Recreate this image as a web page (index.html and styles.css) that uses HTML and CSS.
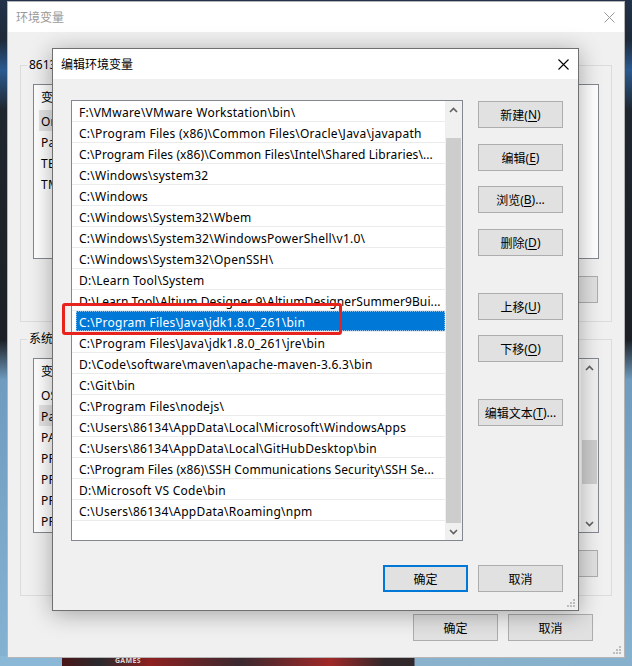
FILE: index.html
```html
<!DOCTYPE html>
<html lang="zh-CN">
<head>
<meta charset="utf-8">
<title>编辑环境变量</title>
<link rel="stylesheet" href="styles.css">
</head>
<body>
<div class="desktop">
  <span class="wall-text">GAMES</span>

  <div class="win bgwin">
    <div class="titlebar">
      <span class="title inactive">环境变量</span>
      <span class="close-btn inactive-x"><svg width="11" height="11" viewBox="0 0 11 11"><path d="M0.5 0.5L10.5 10.5M10.5 0.5L0.5 10.5" stroke="currentColor" stroke-width="1" fill="none"/></svg></span>
    </div>
    <div class="bg-body">
      <fieldset class="group">
        <legend>86134的用户变量(<u>U</u>)</legend>
        <div class="listview">
          <div class="lv-main">
            <div class="lv-head"><span class="col-name">变量</span><span class="col-val">值</span></div>
            <div class="lv-row sel"><span>OneDrive</span></div>
            <div class="lv-row"><span>Path</span></div>
            <div class="lv-row"><span>TEMP</span></div>
            <div class="lv-row"><span>TMP</span></div>
          </div>
        </div>
        <div class="btn-row">
          <button class="btn">新建(<u>N</u>)...</button>
          <button class="btn">编辑(<u>E</u>)...</button>
          <button class="btn">删除(<u>D</u>)</button>
        </div>
      </fieldset>

      <fieldset class="group sys">
        <legend>系统变量(<u>S</u>)</legend>
        <div class="listview">
          <div class="lv-main">
            <div class="lv-head"><span class="col-name">变量</span><span class="col-val">值</span></div>
            <div class="lv-row"><span>OS</span></div>
            <div class="lv-row sel"><span>Path</span></div>
            <div class="lv-row"><span>PATHEXT</span></div>
            <div class="lv-row"><span>PROCESSOR_ARCHITECTURE</span></div>
            <div class="lv-row"><span>PROCESSOR_IDENTIFIER</span></div>
            <div class="lv-row"><span>PROCESSOR_LEVEL</span></div>
            <div class="lv-row"><span>PROCESSOR_REVISION</span></div>
          </div>
          <div class="vscroll">
            <div class="sb-btn"><svg width="9" height="6" viewBox="0 0 9 6"><polyline points="1,5 4.5,1.5 8,5" fill="none" stroke="#606060" stroke-width="1.6"/></svg></div>
            <div class="sb-track small"><div class="sb-thumb small"></div></div>
            <div class="sb-btn"><svg width="9" height="6" viewBox="0 0 9 6"><polyline points="1,1 4.5,4.5 8,1" fill="none" stroke="#606060" stroke-width="1.6"/></svg></div>
          </div>
        </div>
        <div class="btn-row">
          <button class="btn">新建(<u>W</u>)...</button>
          <button class="btn">编辑(<u>I</u>)...</button>
          <button class="btn">删除(<u>L</u>)</button>
        </div>
      </fieldset>

      <div class="foot-row">
        <button class="btn">确定</button>
        <button class="btn">取消</button>
      </div>
    </div>
    <svg class="grip" width="8" height="8" viewBox="0 0 8 8"><g fill="#bdbdbd"><rect x="6" y="0" width="2" height="2"/><rect x="3" y="3" width="2" height="2"/><rect x="6" y="3" width="2" height="2"/><rect x="0" y="6" width="2" height="2"/><rect x="3" y="6" width="2" height="2"/><rect x="6" y="6" width="2" height="2"/></g></svg>
  </div>

  <div class="win dialog">
    <div class="titlebar">
      <span class="title">编辑环境变量</span>
      <span class="close-btn"><svg width="11" height="11" viewBox="0 0 11 11"><path d="M0.5 0.5L10.5 10.5M10.5 0.5L0.5 10.5" stroke="currentColor" stroke-width="1.1" fill="none"/></svg></span>
    </div>
    <div class="dlg-body">
      <div class="pathlist">
        <div class="rows">
          <div class="row">F:\VMware\VMware Workstation\bin\</div>
          <div class="row">C:\Program Files (x86)\Common Files\Oracle\Java\javapath</div>
          <div class="row fit">C:\Program Files (x86)\Common Files\Intel\Shared Libraries\...</div>
          <div class="row">C:\Windows\system32</div>
          <div class="row">C:\Windows</div>
          <div class="row">C:\Windows\System32\Wbem</div>
          <div class="row">C:\Windows\System32\WindowsPowerShell\v1.0\</div>
          <div class="row">C:\Windows\System32\OpenSSH\</div>
          <div class="row">D:\Learn Tool\System</div>
          <div class="row fit">D:\Learn Tool\Altium Designer 9\AltiumDesignerSummer9Bui...</div>
          <div class="row sel"><span>C:\Program Files\Java\jdk1.8.0_261\bin</span></div>
          <div class="row">C:\Program Files\Java\jdk1.8.0_261\jre\bin</div>
          <div class="row">D:\Code\software\maven\apache-maven-3.6.3\bin</div>
          <div class="row">C:\Git\bin</div>
          <div class="row">C:\Program Files\nodejs\</div>
          <div class="row">C:\Users\86134\AppData\Local\Microsoft\WindowsApps</div>
          <div class="row">C:\Users\86134\AppData\Local\GitHubDesktop\bin</div>
          <div class="row fit">C:\Program Files (x86)\SSH Communications Security\SSH Se...</div>
          <div class="row">D:\Microsoft VS Code\bin</div>
          <div class="row">C:\Users\86134\AppData\Roaming\npm</div>
        </div>
        <div class="vscroll">
          <div class="sb-btn"><svg width="9" height="6" viewBox="0 0 9 6"><polyline points="1,5 4.5,1.5 8,5" fill="none" stroke="#606060" stroke-width="1.6"/></svg></div>
          <div class="sb-track"><div class="sb-thumb"></div></div>
          <div class="sb-btn"><svg width="9" height="6" viewBox="0 0 9 6"><polyline points="1,1 4.5,4.5 8,1" fill="none" stroke="#606060" stroke-width="1.6"/></svg></div>
        </div>
      </div>
      <div class="side">
        <button class="btn">新建(<u>N</u>)</button>
        <button class="btn g16">编辑(<u>E</u>)</button>
        <button class="btn g15">浏览(<u>B</u>)...</button>
        <button class="btn g16">删除(<u>D</u>)</button>
        <button class="btn g37">上移(<u>U</u>)</button>
        <button class="btn g15">下移(<u>O</u>)</button>
        <button class="btn g37">编辑文本(<u>T</u>)...</button>
      </div>
      <div class="dlg-foot">
        <button class="btn default">确定</button>
        <button class="btn">取消</button>
      </div>
    </div>
    <div class="mark"></div>
    <svg class="grip" width="8" height="8" viewBox="0 0 8 8"><g fill="#bdbdbd"><rect x="6" y="0" width="2" height="2"/><rect x="3" y="3" width="2" height="2"/><rect x="6" y="3" width="2" height="2"/><rect x="0" y="6" width="2" height="2"/><rect x="3" y="6" width="2" height="2"/><rect x="6" y="6" width="2" height="2"/></g></svg>
  </div>
</div>
</body>
</html>
```

FILE: styles.css
```css
html, body {
  margin: 0;
  padding: 0;
}

.desktop {
  position: relative;
  width: 632px;
  height: 666px;
  overflow: hidden;
  font-family: "Noto Sans", "Noto Sans CJK SC", sans-serif;
  font-size: 12px;
  color: #000;
  background:
    linear-gradient(to right, #8cb8d8 0, #8cb8d8 62px, #4a1618 62px, #2a2a2e 100px, #8e2020 150px, #3a2a30 240px, #a02828 330px, #30282a 385px, #30282a 414px, #8ab2cc 415px, #86b0cc 100%) bottom left / 100% 10px no-repeat,
    linear-gradient(to bottom, #22324a 0, #1f2a3a 40px, #2a5a90 70px, #20262e 110px, #1c2026 340px, #6f9cbf 380px, #86b2d2 100%);
}

.wall-text {
  position: absolute;
  left: 115px;
  top: 656px;
  font-size: 7px;
  font-weight: bold;
  color: #d8d8d8;
  letter-spacing: 0.3px;
}

.win {
  position: absolute;
  box-sizing: border-box;
  background: #f0f0f0;
  display: flex;
  flex-direction: column;
}

.bgwin {
  left: 7px;
  top: 1px;
  width: 618px;
  height: 657px;
  border: 1px solid #b5b5b5;
}

.dialog {
  left: 52px;
  top: 48px;
  width: 527px;
  height: 563px;
  border: 1px solid #707070;
  box-shadow: 0 3px 22px rgba(0, 0, 0, 0.32);
}

.titlebar {
  height: 30px;
  flex: none;
  background: #fff;
  display: flex;
  align-items: center;
  justify-content: space-between;
  padding-left: 8px;
}

.title {
  line-height: 30px;
  padding-top: 1px;
}

.title.inactive {
  color: #9a9a9a;
}

.close-btn {
  width: 30px;
  height: 30px;
  display: flex;
  align-items: center;
  justify-content: center;
  color: #000;
}

.close-btn.inactive-x {
  color: #9a9a9a;
}

/* ---------- background window ---------- */
.bg-body {
  flex: 1;
  display: flex;
  flex-direction: column;
  padding: 25px 12px 0 12px;
}

.group {
  margin: 0;
  border: 1px solid #dcdcdc;
  padding: 11px 12px 18px 12px;
  min-width: 0;
}

.group.sys {
  margin-top: 9px;
}

.group legend {
  padding: 0 2px;
  margin-left: -6px;
  line-height: 16px;
}

.listview {
  height: 175px;
  box-sizing: border-box;
  border: 1px solid #828790;
  background: #fff;
  display: flex;
}

.lv-main {
  flex: 1;
  min-width: 0;
  overflow: hidden;
}

.lv-head {
  height: 25px;
  display: flex;
  align-items: center;
}

.col-name {
  width: 150px;
  padding-left: 7px;
  border-right: 1px solid #e5e5e5;
  line-height: 25px;
}

.col-val {
  padding-left: 7px;
}

.lv-row {
  height: 21px;
  padding-left: 5px;
  white-space: nowrap;
  overflow: hidden;
}

.lv-row span {
  padding: 0 2px;
  display: inline-block;
  height: 21px;
  line-height: 23px;
  letter-spacing: 0.25px;
}

.lv-row.sel span {
  background: #e5e5e5;
}

.btn-row {
  display: flex;
  justify-content: flex-end;
  gap: 10px;
  margin-top: 17px;
  padding-right: 1px;
}

.foot-row {
  display: flex;
  justify-content: flex-end;
  gap: 10px;
  margin-top: 18px;
  margin-right: 19px;
}

.grip {
  position: absolute;
  right: 3px;
  bottom: 3px;
}

/* ---------- buttons ---------- */
.btn {
  width: 85px;
  height: 27px;
  box-sizing: border-box;
  margin: 0;
  padding: 0;
  background: #e1e1e1;
  border: 1px solid #adadad;
  font: inherit;
  color: #000;
  display: flex;
  align-items: center;
  justify-content: center;
  white-space: nowrap;
}

.btn u {
  text-underline-offset: 2px;
}

.btn.default {
  border: 2px solid #0078d7;
}

/* ---------- dialog ---------- */
.dlg-body {
  flex: 1;
  display: grid;
  grid-template-columns: 392px 85px;
  grid-template-rows: 441px 27px;
  column-gap: 15px;
  row-gap: 24px;
  padding: 21px 15px 18px 18px;
}

.pathlist {
  box-sizing: border-box;
  border: 1px solid #828790;
  background: #fff;
  display: flex;
  min-height: 0;
}

.rows {
  flex: 1;
  min-width: 0;
  overflow: hidden;
}

.row {
  height: 20px;
  line-height: 23px;
  border-bottom: 1px solid #ebebeb;
  padding-left: 7px;
  white-space: nowrap;
  overflow: hidden;
  letter-spacing: 0.25px;
}

.row.fit {
  letter-spacing: 0.1px;
}

.row.sel {
  padding-left: 4px;
}

.row.sel span {
  display: block;
  height: 20px;
  padding-left: 3px;
  background: #0078d7;
  color: #fff;
  outline: 1px dotted rgba(255, 255, 255, 0.55);
  outline-offset: -1px;
}

.vscroll {
  width: 17px;
  flex: none;
  background: #f0f0f0;
  display: flex;
  flex-direction: column;
}

.sb-btn {
  height: 17px;
  flex: none;
  display: flex;
  align-items: center;
  justify-content: center;
}

.sb-track {
  flex: 1;
  display: flex;
  flex-direction: column;
  padding: 20px 1px 0 1px;
}

.sb-thumb {
  flex: 1;
  background: #cdcdcd;
}

.sb-track.small {
  padding-top: 64px;
}

.sb-thumb.small {
  flex: none;
  height: 44px;
}

.side {
  display: flex;
  flex-direction: column;
  padding-top: 1px;
}

.side .g15 { margin-top: 15px; }
.side .g16 { margin-top: 16px; }
.side .g37 { margin-top: 37px; }

.dlg-foot {
  grid-column: 1 / -1;
  display: flex;
  justify-content: flex-end;
  gap: 10px;
}

.mark {
  position: absolute;
  left: 9px;
  top: 254px;
  width: 280px;
  height: 32px;
  box-sizing: border-box;
  border: 3px solid #e8231d;
  border-radius: 3px;
  pointer-events: none;
}
```
